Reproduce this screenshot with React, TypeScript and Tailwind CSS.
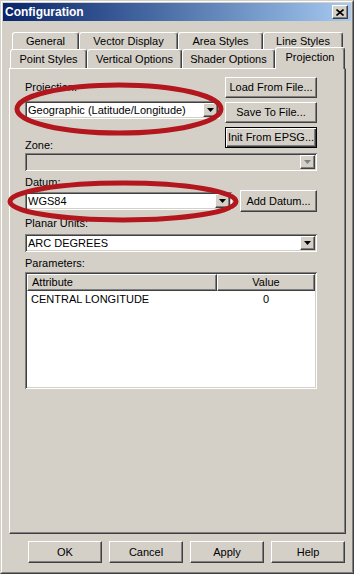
import React from "react";

const raised =
  "border border-t-white border-l-white border-r-[#404040] border-b-[#404040] shadow-[inset_-1px_-1px_#808080]";
const sunken =
  "shadow-[inset_1px_1px_#808080,inset_-1px_-1px_#ffffff,inset_2px_2px_#404040,inset_-2px_-2px_#d4d0c8]";

function Arrow({ disabled }: { disabled?: boolean }) {
  return (
    <svg width="7" height="4" viewBox="0 0 7 4">
      <polygon points="0,0 7,0 3.5,4" fill={disabled ? "#808080" : "#000000"} />
    </svg>
  );
}

function Combo({
  value,
  width,
  disabled,
}: {
  value?: string;
  width: string;
  disabled?: boolean;
}) {
  return (
    <div
      className={`${width} h-[18px] p-[2px] flex ${sunken} ${
        disabled ? "bg-[#d4d0c8]" : "bg-white"
      }`}
    >
      <div className="flex-1 pl-[1px] leading-[14px] truncate">{value}</div>
      <div className={`w-[15px] h-full flex items-center justify-center bg-[#d4d0c8] ${raised}`}>
        <Arrow disabled={disabled} />
      </div>
    </div>
  );
}

function Button({
  label,
  className,
  isDefault,
}: {
  label: string;
  className: string;
  isDefault?: boolean;
}) {
  const bevel = isDefault
    ? "border border-black shadow-[inset_1px_1px_#ffffff,inset_-1px_-1px_#404040,inset_-2px_-2px_#808080]"
    : raised;
  return (
    <div className={`${className} ${bevel} bg-[#d4d0c8] flex items-center justify-center`}>
      {label}
    </div>
  );
}

function Tab({ label, w, selected }: { label: string; w: string; selected?: boolean }) {
  return (
    <div
      className={`${w} ${
        selected ? "h-[22px] -mb-[1px] relative z-10 pb-[3px]" : "h-full"
      } bg-[#d4d0c8] rounded-t-[3px] border-t border-l border-r border-t-white border-l-white border-r-[#404040] shadow-[inset_-1px_0_#808080] flex items-center justify-center whitespace-nowrap`}
    >
      {label}
    </div>
  );
}

function Label({ text, className = "" }: { text: string; className?: string }) {
  return <div className={`h-[13px] leading-[13px] ${className}`}>{text}</div>;
}

export default function App() {
  return (
    <div className="relative w-[354px] h-[574px] bg-[#d4d0c8] font-['Liberation_Sans',Arial,sans-serif] text-[11px] text-black select-none">
      <div className="w-full h-full border border-t-[#d4d0c8] border-l-[#d4d0c8] border-r-[#404040] border-b-[#404040]">
        <div className="w-full h-full border border-t-white border-l-white border-r-[#808080] border-b-[#808080] p-[1px] flex flex-col">
          {/* title bar */}
          <div className="h-[18px] bg-linear-to-r from-[#0a246a] to-[#a6caf0] flex items-center justify-between pl-[2px] pr-[3px]">
            <span className="text-white font-bold text-[12px] leading-[18px]">Configuration</span>
            <div className={`w-[16px] h-[14px] bg-[#d4d0c8] ${raised} flex items-center justify-center`}>
              <svg width="8" height="7" viewBox="0 0 8 7">
                <path d="M0.5 0.5 L7.5 6.5 M7.5 0.5 L0.5 6.5" stroke="#000" strokeWidth="1.6" />
              </svg>
            </div>
          </div>

          <div className="pl-[6px] pr-[5px] flex flex-col">
            {/* tabs */}
            <div className="mt-[11px] h-[17px] flex ml-[3px]">
              <Tab label="General" w="w-[67px]" />
              <Tab label="Vector Display" w="w-[99px]" />
              <Tab label="Area Styles" w="w-[85px]" />
              <Tab label="Line Styles" w="w-[80px]" />
            </div>
            <div className="h-[19px] flex items-end ml-[1px]">
              <Tab label="Point Styles" w="w-[77px]" />
              <Tab label="Vertical Options" w="w-[95px]" />
              <Tab label="Shader Options" w="w-[93px]" />
              <Tab label="Projection" w="w-[70px]" selected />
            </div>

            {/* panel */}
            <div className={`h-[466px] ${raised} pl-[15px] flex flex-col`}>
              <div className="flex w-[292px]">
                <div className="w-[197px] flex flex-col">
                  <Label text="Projection:" className="mt-[12px]" />
                  <div className="mt-[7px]">
                    <Combo value="Geographic (Latitude/Longitude)" width="w-[195px]" />
                  </div>
                  <Label text="Zone:" className="mt-[20px]" />
                </div>
                <div className="ml-auto w-[92px] pt-[8px] flex flex-col gap-[4px]">
                  <Button label="Load From File..." className="h-[21px]" />
                  <Button label="Save To File..." className="h-[21px]" />
                  <Button label="Init From EPSG..." className="h-[21px]" isDefault />
                </div>
              </div>
              <div className="mt-[1px]">
                <Combo width="w-[292px]" disabled />
              </div>

              <Label text="Datum:" className="mt-[5px]" />
              <div className="mt-[1px] h-[22px] flex items-center w-[292px]">
                <Combo value="WGS84" width="w-[207px]" />
                <Button label="Add Datum..." className="ml-auto w-[77px] h-[22px]" />
              </div>

              <Label text="Planar Units:" className="mt-[5px]" />
              <div className="mt-[4px]">
                <Combo value="ARC DEGREES" width="w-[292px]" />
              </div>

              <Label text="Parameters:" className="mt-[5px]" />
              <div className={`mt-[2px] w-[292px] h-[117px] bg-white p-[2px] ${sunken}`}>
                <div className="flex h-[17px]">
                  <div className={`w-[190px] ${raised} bg-[#d4d0c8] pl-[4px] leading-[15px]`}>
                    Attribute
                  </div>
                  <div className={`flex-1 ${raised} bg-[#d4d0c8] text-center leading-[15px]`}>
                    Value
                  </div>
                </div>
                <div className="flex mt-[2px] leading-[13px]">
                  <div className="w-[190px] pl-[4px]">CENTRAL LONGITUDE</div>
                  <div className="flex-1 text-center">0</div>
                </div>
              </div>
            </div>

            {/* dialog buttons */}
            <div className="mt-[7px] flex justify-end gap-[7px] pr-[1px]">
              <Button label="OK" className="w-[74px] h-[22px]" />
              <Button label="Cancel" className="w-[74px] h-[22px]" />
              <Button label="Apply" className="w-[74px] h-[22px]" />
              <Button label="Help" className="w-[74px] h-[22px]" />
            </div>
          </div>
        </div>
      </div>

      {/* red highlight marks drawn over the dialog */}
      <svg
        className="absolute inset-0 pointer-events-none"
        width="354"
        height="574"
        viewBox="0 0 354 574"
      >
        <ellipse cx="119" cy="109" rx="102" ry="24" fill="none" stroke="#b3161d" strokeWidth="5" />
        <ellipse cx="123" cy="201.5" rx="113" ry="18.5" fill="none" stroke="#b3161d" strokeWidth="5" />
      </svg>
    </div>
  );
}
